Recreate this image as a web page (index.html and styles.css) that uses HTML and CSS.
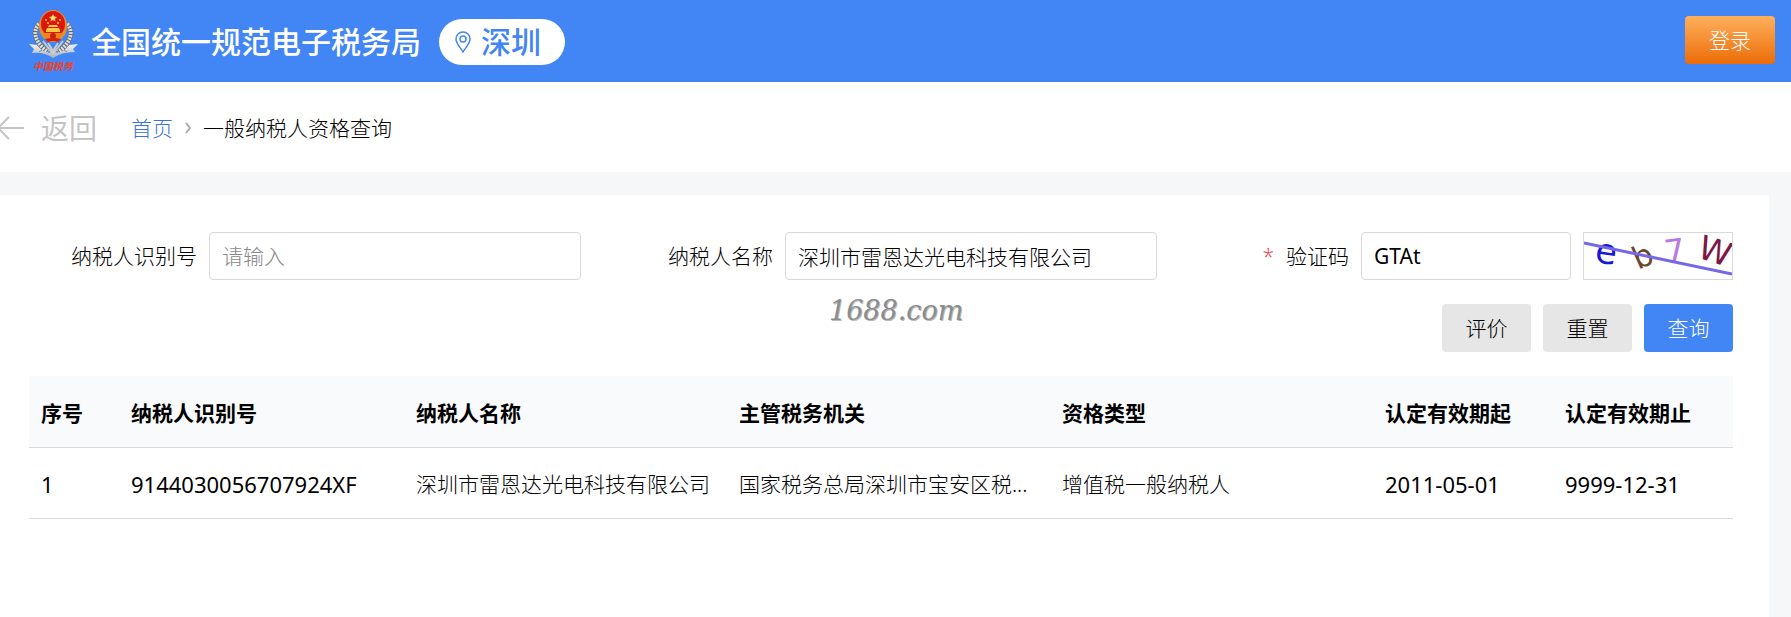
FILE: index.html
```
<!DOCTYPE html>
<html lang="zh-CN">
<head>
  <meta charset="UTF-8" />
  <meta name="viewport" content="width=device-width, initial-scale=1.0"/>
  <title>一般纳税人资格查询</title>
  <link rel="stylesheet" href="styles.css">
</head>
<body>
  <header class="header">
    <svg class="logo" viewBox="0 0 50 66" aria-hidden="true">
      <defs>
        <linearGradient id="ribbon" x1="0" y1="0" x2="0" y2="1">
          <stop offset="0" stop-color="#f4f6f8"/>
          <stop offset="1" stop-color="#a9b0b8"/>
        </linearGradient>
      </defs>
      <!-- wreath -->
      <path d="M10 15C3 22 6 34 19 43M38 15C45 22 42 34 29 43" fill="none" stroke="#596476" stroke-width="5"/>
      <path d="M10 15C3 22 6 34 19 43M38 15C45 22 42 34 29 43" fill="none" stroke="#dcdcd2" stroke-width="4" stroke-dasharray="2 1"/>
      <path d="M14 32L24 45M34 32L24 45M19 34L24 42L29 34" fill="none" stroke="#c9cbc8" stroke-width="2"/>
      <!-- ribbon -->
      <path d="M0 35L8 36L13 41Q20 46 24 42Q28 46 35 41L40 36L49 35L44 40L46 43Q32 43 24 49Q16 43 3 44L5 40Z" fill="url(#ribbon)"/>
      <path d="M8 36L13 41L10 43M40 36L35 41L38 43" fill="none" stroke="#858e99" stroke-width="1"/>
      <!-- emblem -->
      <ellipse cx="24" cy="17" rx="14" ry="16" fill="#ef8d25"/>
      <ellipse cx="24" cy="15" rx="12" ry="13" fill="#dc1712"/>
      <path d="M24 5l1.2 2.6 2.9.3-2.2 1.9.7 2.8-2.6-1.5-2.6 1.5.7-2.8-2.2-1.9 2.9-.3z" fill="#ffe36b"/>
      <g fill="#ffc83f">
        <circle cx="17" cy="11" r="1"/><circle cx="19" cy="14" r="1"/>
        <circle cx="29" cy="14" r="1"/><circle cx="31" cy="11" r="1"/>
        <path d="M19 18L20 16H28L29 18ZM17 21L18 19H30L31 21V23H17Z"/>
      </g>
      <path d="M13 24H35L31 29Q24 32 17 29Z" fill="#e9861c"/>
      <circle cx="24" cy="27" r="3" fill="#c9210f"/>
      <path d="M16 30Q24 28 32 30L29 33Q24 31 19 33Z" fill="#d3200f"/>
      <text class="logo-text" x="24" y="61" text-anchor="middle">中国税务</text>
    </svg>
    <div class="title">全国统一规范电子税务局</div>
    <button class="region" type="button">
      <svg class="pin" viewBox="0 0 16 22" fill="none" stroke="currentColor" stroke-width="1.5" aria-hidden="true">
        <path d="M8 21C6 17 1 13 1 8A7 7 0 0 1 15 8C15 13 10 17 8 21Z"/>
        <circle cx="8" cy="8" r="3"/>
      </svg>
      深圳
    </button>
    <button class="login" type="button">登录</button>
  </header>

  <nav class="crumbs">
    <a class="back" href="#">
      <svg class="arrow" viewBox="0 0 25 24" fill="none" stroke="currentColor" stroke-width="2" aria-hidden="true">
        <path d="M9 1L-2 12L9 23M-2 12H24"/>
      </svg>
      返回
    </a>
    <a class="home" href="#">首页</a>
    <svg class="chevron" viewBox="0 0 6 12" fill="none" stroke="currentColor" stroke-width="2" aria-hidden="true">
      <path d="M1 1L5 6L1 11"/>
    </svg>
    <span>一般纳税人资格查询</span>
  </nav>

  <main class="panel">
    <form class="search">
      <div class="field">
        <label for="taxNo">纳税人识别号</label>
        <input id="taxNo" type="text" placeholder="请输入">
      </div>
      <div class="field">
        <label for="taxName">纳税人名称</label>
        <input id="taxName" type="text" value="深圳市雷恩达光电科技有限公司">
      </div>
      <div class="field">
        <label for="code"><span class="required">*</span>验证码</label>
        <input id="code" class="code" type="text" value="GTAt">
        <button class="captcha" type="button" aria-label="刷新验证码">
          <svg viewBox="0 0 148 46" aria-hidden="true">
            <text transform="translate(10 29) rotate(8)" fill="#1717d8" font-size="35">e</text>
            <text transform="translate(54 37) rotate(-24)" fill="#68472b" font-size="31">b</text>
            <text transform="translate(82 31) rotate(-8)" fill="#b879e2" font-size="33">7</text>
            <text transform="translate(112 24) rotate(18)" fill="#7d1748" font-size="33">W</text>
            <path d="M0 10L148 41" stroke="#7568e6" stroke-width="3"/>
          </svg>
        </button>
      </div>
      <div class="actions">
        <span class="watermark">1688.com</span>
        <button class="btn" type="button">评价</button>
        <button class="btn" type="reset">重置</button>
        <button class="btn primary" type="button">查询</button>
      </div>
    </form>

    <table class="result">
      <colgroup>
        <col class="col-index">
        <col class="col-id">
        <col class="col-text">
        <col class="col-text">
        <col class="col-text">
        <col class="col-date">
        <col class="col-date">
      </colgroup>
      <thead>
        <tr>
          <th>序号</th>
          <th>纳税人识别号</th>
          <th>纳税人名称</th>
          <th>主管税务机关</th>
          <th>资格类型</th>
          <th>认定有效期起</th>
          <th>认定有效期止</th>
        </tr>
      </thead>
      <tbody>
        <tr>
          <td class="num">1</td>
          <td class="num">9144030056707924XF</td>
          <td>深圳市雷恩达光电科技有限公司</td>
          <td>国家税务总局深圳市宝安区税...</td>
          <td>增值税一般纳税人</td>
          <td class="num">2011-05-01</td>
          <td class="num">9999-12-31</td>
        </tr>
      </tbody>
    </table>
  </main>
</body>
</html>
```

FILE: styles.css
```
* {
  box-sizing: border-box;
}

body {
  margin: 0;
  min-height: 100vh;
  display: flex;
  flex-direction: column;
  background: #f5f7f9;
  color: #000;
  font-family: "Noto Sans", "Noto Sans CJK SC", sans-serif;
  font-size: 21px;
  font-weight: 300;
  line-height: 30px;
}

button, input {
  font: inherit;
  color: inherit;
}

button {
  padding: 0;
  border: 0;
  cursor: pointer;
}

a {
  text-decoration: none;
}

.header {
  display: flex;
  align-items: center;
  height: 82px;
  padding: 2px 16px 0 29px;
  background: #4285f5;
  color: #fff;
}

.logo {
  width: 50px;
  height: 66px;
  margin-right: 12px;
}

.logo-text {
  fill: #e5452f;
  font-family: "Noto Sans CJK SC", sans-serif;
  font-size: 10px;
  font-style: italic;
  font-weight: 700;
}

.title {
  margin-right: 18px;
  font-size: 30px;
  font-weight: 500;
  line-height: 44px;
}

.region {
  display: flex;
  align-items: center;
  gap: 10px;
  height: 46px;
  padding: 0 24px 0 16px;
  border-radius: 23px;
  background: #fff;
  color: #4285f5;
  font-size: 30px;
  font-weight: 500;
}

.pin {
  width: 16px;
  height: 22px;
}

.login {
  align-self: flex-start;
  width: 90px;
  height: 48px;
  margin-top: 14px;
  margin-left: auto;
  border-radius: 4px;
  background: linear-gradient(#ffb05c, #ec6c08);
}

.crumbs {
  display: flex;
  align-items: center;
  height: 90px;
  padding-top: 1px;
  background: #fff;
}

.back {
  display: flex;
  align-items: center;
  gap: 16px;
  margin-right: 34px;
  color: #c4c4c4;
  font-size: 28px;
  font-weight: 400;
}

.arrow {
  width: 25px;
  height: 24px;
}

.home {
  color: #3a73d8;
}

.chevron {
  width: 6px;
  height: 12px;
  margin: 0 12px;
  color: #aaa;
}

.panel {
  flex: 1;
  margin: 23px 22px 0 0;
  padding-top: 37px;
  background: #fff;
}

.search {
  display: grid;
  grid-template-columns: repeat(3, minmax(0, 1fr));
  row-gap: 24px;
  padding: 0 36px 24px 5px;
}

.field {
  display: flex;
  align-items: center;
}

.field label {
  flex: 0 0 204px;
  padding-right: 12px;
  text-align: right;
}

.field input {
  flex: 1;
  min-width: 0;
  height: 48px;
  padding: 0 12px;
  border: 1px solid #d9d9d9;
  border-radius: 4px;
  background: #fff;
}

.field input::placeholder {
  color: #888;
}

.field .code {
  font-weight: 400;
}

.required {
  margin-right: 12px;
  color: #e5484d;
}

.captcha {
  width: 150px;
  height: 48px;
  margin-left: 12px;
  border: 1px solid #d9d9d9;
  background: #fff;
  font-weight: 400;
}

.captcha svg {
  display: block;
  width: 148px;
  height: 46px;
  font-family: "DejaVu Sans", sans-serif;
}

.actions {
  position: relative;
  grid-column: 1 / -1;
  display: flex;
  justify-content: flex-end;
  gap: 12px;
}

.btn {
  width: 89px;
  height: 48px;
  border-radius: 4px;
  background: #e6e6e6;
}

.btn.primary {
  background: #4285f5;
  color: #fff;
}

/* site mark laid over the form */
.watermark {
  position: absolute;
  top: -8px;
  left: 50%;
  transform: translateX(-40px);
  color: #8c8c8c;
  font-family: "DejaVu Serif", serif;
  font-size: 27px;
  font-style: italic;
  font-weight: 400;
  text-shadow: 1px 1px 0 #bbb;
}

.result {
  width: calc(100% - 65px);
  margin-left: 29px;
  border-collapse: collapse;
  table-layout: fixed;
}

.col-index {
  width: 90px;
}

.col-id {
  width: 285px;
}

.col-date {
  width: 180px;
}

.result th,
.result td {
  height: 71px;
  padding: 2px 12px 0;
  border-bottom: 1px solid #d9d9d9;
  text-align: left;
  white-space: nowrap;
  overflow: hidden;
  text-overflow: ellipsis;
}

.result th {
  padding-top: 4px;
  background: #f9fafb;
  font-weight: 700;
}

.result .num {
  font-size: 22px;
  font-weight: 400;
}
```
